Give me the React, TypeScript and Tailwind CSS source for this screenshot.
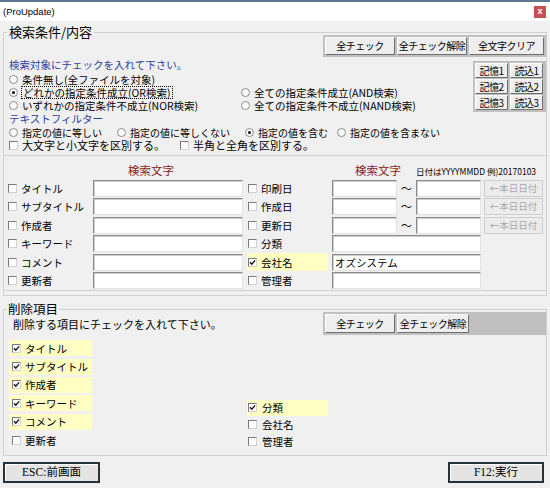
import React from "react";

const Box = ({ on = false }: { on?: boolean }) => (
  <span className="inline-flex w-[9px] h-[9px] shrink-0 items-center justify-center border border-[#7a7a7a] border-b-[#d2d2d2] border-r-[#d2d2d2] bg-white">
    {on && (
      <svg viewBox="0 0 7 7" className="w-[7px] h-[7px]">
        <path d="M1 3.3L2.8 5.2L6.1 1.4" fill="none" stroke="#111" strokeWidth="1.4" />
      </svg>
    )}
  </span>
);

const Radio = ({ on = false }: { on?: boolean }) => (
  <span className="inline-flex w-[9px] h-[9px] shrink-0 items-center justify-center rounded-full border border-[#8a8a8a] bg-white">
    {on && <span className="w-[3px] h-[3px] rounded-full bg-black" />}
  </span>
);

const Btn = ({ className, children }: { className: string; children: React.ReactNode }) => (
  <div
    className={`flex items-center justify-center bg-[#eeeeee] border border-t-white border-l-white border-b-[#6f6f6f] border-r-[#6f6f6f] text-[10px] leading-none tracking-[-0.5px] whitespace-nowrap ${className}`}
  >
    {children}
  </div>
);

const Field = ({ className, value }: { className: string; value?: string }) => (
  <div
    className={`h-[17px] bg-white border border-t-[#8a8a8a] border-l-[#8a8a8a] border-b-[#e2e2e2] border-r-[#e2e2e2] shadow-[inset_1px_1px_0_#cfcfcf] text-[10.5px] leading-[15px] pl-[2px] whitespace-nowrap ${className}`}
  >
    {value}
  </div>
);

const DateBtn = () => (
  <div className="ml-[3px] w-[59px] h-[17px] flex items-center justify-center bg-[#ececec] border border-[#cdcdcd] text-[9.5px] leading-none text-[#a9a9a9] whitespace-nowrap">
    ←本日日付
  </div>
);

type Row = { l: string; r: string; date?: boolean; rOn?: boolean; rVal?: string };

const rows: Row[] = [
  { l: "タイトル", r: "印刷日", date: true },
  { l: "サブタイトル", r: "作成日", date: true },
  { l: "作成者", r: "更新日", date: true },
  { l: "キーワード", r: "分類" },
  { l: "コメント", r: "会社名", rOn: true, rVal: "オズシステム" },
  { l: "更新者", r: "管理者" },
];

const delLeft: [string, boolean][] = [
  ["タイトル", true],
  ["サブタイトル", true],
  ["作成者", true],
  ["キーワード", true],
  ["コメント", true],
  ["更新者", false],
];

const delRight: [string, boolean][] = [
  ["分類", true],
  ["会社名", false],
  ["管理者", false],
];

export default function App() {
  return (
    <div className="w-[550px] h-[488px] overflow-hidden bg-[#f0f0f0] text-black font-['Noto_Sans_CJK_JP',sans-serif]">
      {/* title bar */}
      <div className="h-[21px] bg-white border-t-2 border-[#5b7891] flex items-center justify-between pl-[3px] pr-[4px]">
        <span className="font-['Liberation_Sans',sans-serif] text-[9.5px] leading-none">(ProUpdate)</span>
        <span className="w-[12px] h-[12px] bg-[#c75050] text-white text-[9px] leading-none flex items-center justify-center font-['Liberation_Sans',sans-serif] font-bold">
          x
        </span>
      </div>

      <div className="pl-[3px]">
        {/* 検索条件/内容 */}
        <fieldset className="w-[544px] h-[272px] mt-[3px] border border-[#d0d0d0]">
          <legend className="ml-[3px] px-[2px] text-[13px] leading-[16px]">検索条件/内容</legend>

          <div className="-mt-[5px] flex justify-end">
            <div className="w-[223px] flex gap-[2px] p-[2px] bg-[#c0c0c0]">
              <Btn className="w-[70px] h-[18px]">全チェック</Btn>
              <Btn className="w-[70px] h-[18px]">全チェック解除</Btn>
              <Btn className="w-[75px] h-[18px]">全文字クリア</Btn>
            </div>
          </div>

          <div className="flex items-start justify-between">
            <div className="pl-[5px] pt-[1px] text-[10.5px] whitespace-nowrap">
              <div className="h-[13px] leading-[13px] mb-[2px] text-[#2a3ea0]">検索対象にチェックを入れて下さい。</div>
              <div className="h-[13px] flex items-center gap-[4px] leading-[13px]">
                <Radio />
                <span>条件無し(全ファイルを対象)</span>
              </div>
              <div className="h-[13px] grid grid-cols-[232px_1fr] leading-[13px]">
                <div className="flex items-center gap-[3px]">
                  <Radio on />
                  <span className="border border-dotted border-black px-[1px] leading-[11px]">どれかの指定条件成立(OR検索)</span>
                </div>
                <div className="flex items-center gap-[4px]">
                  <Radio />
                  <span>全ての指定条件成立(AND検索)</span>
                </div>
              </div>
              <div className="h-[13px] grid grid-cols-[232px_1fr] leading-[13px]">
                <div className="flex items-center gap-[4px]">
                  <Radio />
                  <span>いずれかの指定条件不成立(NOR検索)</span>
                </div>
                <div className="flex items-center gap-[4px]">
                  <Radio />
                  <span>全ての指定条件不成立(NAND検索)</span>
                </div>
              </div>
            </div>

            <div className="mt-[4px] w-[73px] p-[2px] flex flex-col gap-[1px] bg-[#c0c0c0]">
              {[1, 2, 3].map((n) => (
                <div key={n} className="flex gap-[2px]">
                  <Btn className="w-[33px] h-[15px]">記憶{n}</Btn>
                  <Btn className="w-[33px] h-[15px]">読込{n}</Btn>
                </div>
              ))}
            </div>
          </div>

          <div className="pl-[5px] text-[10.5px] whitespace-nowrap">
            <div className="h-[14px] leading-[14px] text-[#2a3ea0]">テキストフィルター</div>
            <div className="h-[13px] flex items-center text-[10px] leading-[13px]">
              <div className="w-[108px] flex items-center gap-[4px]">
                <Radio />
                <span>指定の値に等しい</span>
              </div>
              <div className="w-[128px] flex items-center gap-[4px]">
                <Radio />
                <span>指定の値に等しくない</span>
              </div>
              <div className="w-[92px] flex items-center gap-[4px]">
                <Radio on />
                <span>指定の値を含む</span>
              </div>
              <div className="flex items-center gap-[4px]">
                <Radio />
                <span>指定の値を含まない</span>
              </div>
            </div>
            <div className="h-[13px] flex items-center text-[11px] leading-[13px]">
              <div className="w-[171px] flex items-center gap-[4px]">
                <Box />
                <span>大文字と小文字を区別する。</span>
              </div>
              <div className="flex items-center gap-[4px]">
                <Box />
                <span>半角と全角を区別する。</span>
              </div>
            </div>
          </div>

          {/* field panel */}
          <div className="mt-[3px] border-t border-b border-[#d0d0d0]">
            <div className="h-[23px] flex items-end pb-[2px] whitespace-nowrap">
              <span className="ml-[124px] text-[11.5px] leading-[14px] text-[#8a1c1c]">検索文字</span>
              <span className="ml-[181px] text-[11.5px] leading-[14px] text-[#8a1c1c]">検索文字</span>
              <span className="ml-[15px] text-[8.5px] leading-[12px]">日付はYYYYMMDD 例)20170103</span>
            </div>
            {rows.map((r) => (
              <div key={r.l} className="h-[18.5px] flex items-center text-[10.5px] leading-[13px] whitespace-nowrap">
                <div className="w-[89px] pl-[4px] flex items-center gap-[4px]">
                  <Box />
                  <span>{r.l}</span>
                </div>
                <Field className="w-[150px]" />
                <div
                  className={`ml-[4px] w-[81px] h-[18px] pl-[1px] flex items-center gap-[4px] ${r.rOn ? "bg-[#ffffc4]" : ""}`}
                >
                  <Box on={r.rOn} />
                  <span>{r.r}</span>
                </div>
                {r.date ? (
                  <>
                    <Field className="ml-[4px] w-[65px]" />
                    <span className="w-[19px] text-center text-[11px]">〜</span>
                    <Field className="w-[65px]" />
                    <DateBtn />
                  </>
                ) : (
                  <Field className="ml-[4px] w-[149px]" value={r.rVal} />
                )}
              </div>
            ))}
          </div>
        </fieldset>

        {/* 削除項目 */}
        <fieldset className="w-[544px] h-[155px] mt-[5px] border border-[#d0d0d0]">
          <legend className="ml-[3px] px-[1px] text-[12.5px] leading-[16px]">削除項目</legend>
          <div className="-mt-[5px] flex items-center justify-between">
            <span className="pl-[9px] text-[11px] leading-[14px]">削除する項目にチェックを入れて下さい。</span>
            <div className="w-[223px] h-[23px] flex gap-[2px] p-[2px] bg-[#c0c0c0]">
              <Btn className="w-[70px] h-[19px]">全チェック</Btn>
              <Btn className="w-[72px] h-[19px]">全チェック解除</Btn>
            </div>
          </div>
          <div className="mt-[4px] flex items-start text-[10.5px] leading-[13px]">
            <div className="w-[243px]">
              {delLeft.map(([t, on]) => (
                <div key={t} className="h-[18.4px] flex items-center">
                  <div className={`ml-[5px] w-[83px] h-[16px] pl-[3px] flex items-center gap-[4px] ${on ? "bg-[#ffffc4]" : ""}`}>
                    <Box on={on} />
                    <span>{t}</span>
                  </div>
                </div>
              ))}
            </div>
            <div className="mt-[60px]">
              {delRight.map(([t, on]) => (
                <div key={t} className="h-[17px] flex items-center">
                  <div className={`w-[81px] h-[16px] pl-[1px] flex items-center gap-[5px] ${on ? "bg-[#ffffc4]" : ""}`}>
                    <Box on={on} />
                    <span>{t}</span>
                  </div>
                </div>
              ))}
            </div>
          </div>
        </fieldset>

        {/* bottom buttons */}
        <div className="mt-[6px] w-[541px] flex justify-between">
          <div className="w-[97px] h-[21px] border-2 border-[#26333d] bg-[#e4e4e4] shadow-[inset_1px_1px_0_#ffffff] flex items-center justify-center text-[11.5px] leading-none font-['Liberation_Serif','Noto_Sans_CJK_JP',serif]">
            ESC:前画面
          </div>
          <div className="w-[96px] h-[21px] border-2 border-[#26333d] bg-[#e4e4e4] shadow-[inset_1px_1px_0_#ffffff] flex items-center justify-center text-[11.5px] leading-none font-['Liberation_Serif','Noto_Sans_CJK_JP',serif]">
            F12:実行
          </div>
        </div>
      </div>
    </div>
  );
}
